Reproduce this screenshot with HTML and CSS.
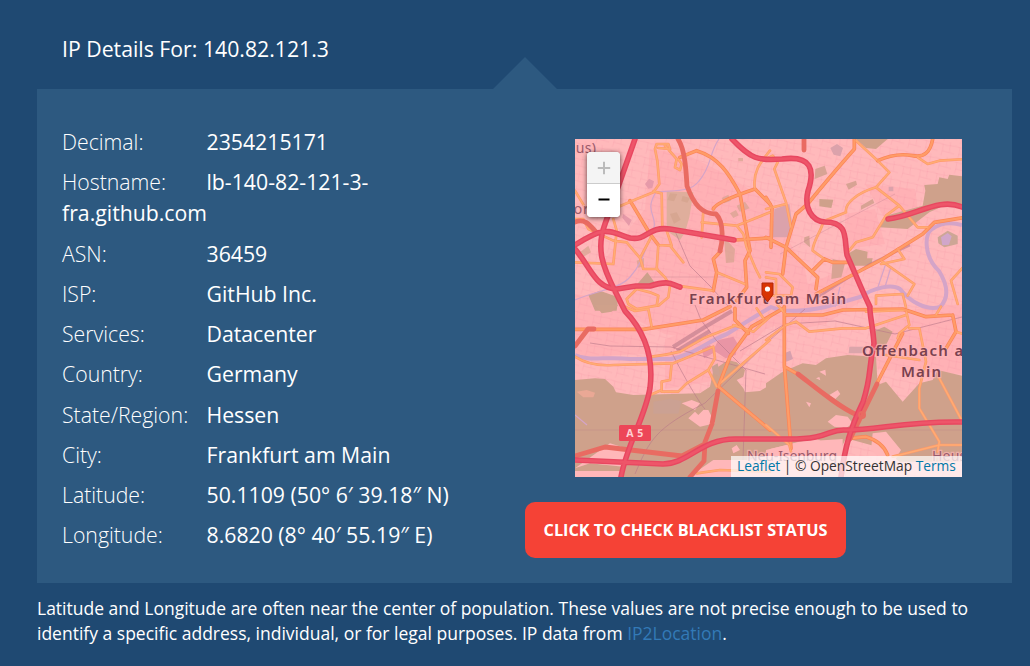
FILE: index.html
```html
<!DOCTYPE html>
<html lang="en">
<head>
<meta charset="utf-8">
<title>IP Details</title>
<link rel="stylesheet" href="styles.css">
</head>
<body>
<main class="page">
  <h1 class="heading">IP Details For: 140.82.121.3</h1>
  <section class="panel">
    <div class="details">
      <p class="row"><span class="label">Decimal:</span><span>2354215171</span></p>
      <p class="row"><span class="label">Hostname:</span><span>lb-140-82-121-3-<br>fra.github.com</span></p>
      <p class="row"><span class="label">ASN:</span><span>36459</span></p>
      <p class="row"><span class="label">ISP:</span><span>GitHub Inc.</span></p>
      <p class="row"><span class="label">Services:</span><span>Datacenter</span></p>
      <p class="row"><span class="label">Country:</span><span>Germany</span></p>
      <p class="row"><span class="label">State/Region:</span><span>Hessen</span></p>
      <p class="row"><span class="label">City:</span><span>Frankfurt am Main</span></p>
      <p class="row"><span class="label">Latitude:</span><span>50.1109 (50° 6′ 39.18″ N)</span></p>
      <p class="row"><span class="label">Longitude:</span><span>8.6820 (8° 40′ 55.19″ E)</span></p>
    </div>
    <div class="side">
      <div class="map">
        <svg class="tiles" viewBox="0 0 387 338" width="387" height="338">
          <defs>
            <pattern id="streets" width="17" height="15" patternUnits="userSpaceOnUse" patternTransform="rotate(12)">
              <path d="M0 3L8 4 17 3M4 3L5 9 4 15M11 0L12 10M4 10L17 11" fill="none" stroke="#f391a2" stroke-width=".6" opacity=".4"/>
            </pattern>
          </defs>
          <rect width="387" height="338" fill="#ffb9bb"/>
          <!-- built-up areas -->
          <g fill="#ffb1b5">
            <path d="M75 10L110 15 150 35 190 60 230 130 235 160 205 185 150 205 90 195 40 170 30 120 70 70z"/>
            <path d="M290 45L340 50 345 85 310 80zM270 75L300 70 310 105 270 110z"/>
            <path d="M0 155L60 165 70 215 0 218z"/>
            <path d="M200 160L280 125 290 160 250 185 200 195z"/>
            <path d="M300 175L387 165V235L300 230z"/>
            <path d="M90 200L150 180 190 190 150 240 90 250z"/>
          </g>
          <rect width="387" height="338" fill="url(#streets)"/>
          <!-- woods and parks -->
          <g transform="translate(-5 -5) scale(.33333)">
            <path fill="#dfae9c" d="M290 172L370 175 358 250 345 295 330 318 290 290z"/>
            <path fill="#cda08b" d="M55 483L90 470 145 490 140 530 75 530zM200 452L232 415 255 447 245 462z"/>
            <path fill="#d3a28c" opacity=".65" d="M462 310L495 345 492 385 468 387zM300 178l22 2-10 22-20-4zM338 186l22 6-8 14-18-5zM300 240l20-5 12 22-20 12zM500 215l25-12 14 20-30 10zM455 192l20-10 8 18-20 8zM505 72l14 0 0 10-14 0zM480 238l18-10 8 16-16 8zM200 380l22-8 0 25-18 4zM30 355l25-20 8 20-25 15z"/>
            <path fill="#e69aa9" d="M225 150l12-16 15 8-5 20-12 2zM160 240l25 18-8 18-20-25zM75 215l15-10 25 20-10 15z"/>
          </g>
          <g transform="translate(191 -5) scale(.33333)">
            <path fill="#cfa18b" d="M270 15L365 15 330 45 300 42zM475 153L515 150 520 130 545 135 550 122 600 128V225L540 212 490 235 425 285 340 280 360 245 470 215 478 170zM160 195l42 2-6 25-36-5zM245 360l25-15 35 8-2 20 17 0-5 22-60 0z"/>
            <path fill="#d8a394" d="M240 150l30-10 3 12-25 15zM285 215l35-20 5 12-40 20zM148 105l28-10 8 25-38 15zM115 310l15-5 2 35-18-15zM200 375l38 10-12 45-30 5z"/>
            <path fill="#dba2ab" d="M25 225L70 210 80 280 65 310 18 310zM193 42l20-12 18 12-8 25-20-5zM368 158h14v14h-14z"/>
            <path fill="#cda695" d="M515 310l30-20 30 15 0 25-40 10-18-12z"/><path fill="#d1a6ca" d="M525 310l20-13 12 10-8 25-20 2z"/>
          </g>
          <g transform="translate(-5 166) scale(.33333)">
            <path fill="#cfa18b" d="M15 225L75 220 105 222 130 245 138 262 190 270 390 265 420 245 430 195 475 165 500 172 525 195 520 215 500 225 520 250 525 262 570 258 600 240V520H15zM75 0H145L125 20 95 25z"/>
            <path fill="#ffb7b9" d="M15 490L120 415 175 432 160 485 60 475zM15 498H150L145 520H15zM335 295l30-10 25 10-15 20zM355 340l20-20 10 10 15-15 15 0 20 40-45 10zM430 465h100l70-15v70H350zM485 430l15-10 10 15-20 10z"/>
            <path fill="#cba193" d="M250 290l50-8 35 6-10 38-75 0zM425 185l18-10 8 40-22-10z"/>
            <path fill="#e995a5" d="M395 130l25-10 10 15 15-30 45-10 12 20-5 35-30 10-30-20-35 20z"/>
            <path fill="#eaa895" d="M20 260l30-5 25 8-5 14-30 0z"/>
          </g>
          <g transform="translate(191 166) scale(.33333)">
            <path fill="#cfa18b" d="M0 235L50 200 110 175 150 180 180 160 245 150 330 155 335 240 360 230 410 290 460 235 500 225 515 195 600 215V470H400L350 430 240 400 220 440 150 400 0 435zM320 80L355 65 380 80 360 120 330 150z"/>
            <path fill="#ffb7b9" d="M185 350l25-20 35 5 15 20-20 15-35-5zM190 270l25-15 8 12-15 15zM160 200l18-6 2 18zM120 290l15 5-5 12zM150 220l10-4 3 10zM320 385l40-5 45 55-30 50-60-50zM0 435L100 410 230 402V520H0z"/>
            <path fill="#dba5aa" d="M250 125h55l-5 20-52 0z"/><path fill="#d7a0ae" d="M55 145l18-8 8 25-20 8z"/>
          </g>
          <!-- rivers -->
          <g class="water">
            <path d="M0 216C15 223 29 217 55 220H96C118 216 133 202 152 195L176 180 196 168C209 174 232 172 250 168L285 158C300 148 317 145 325 150C335 163 352 172 365 168C375 158 372 145 364 132C349 118 349 96 357 90C367 83 377 83 387 86" stroke-width="4"/>
            <path d="M144 0C134 14 137 27 124 42C115 54 99 51 81 53C69 72 82 77 79 88C70 111 67 125 55 138C45 150 20 152 0 161M303 148l8-24M310 148l6-20M260 168l5-20M0 276l12 10" stroke-width="1.200"/>
          </g>
          <!-- railways -->
          <g class="rail">
            <path d="M98 208L130 188 157 172M102 212L135 192" stroke-width="4"/>
            <path d="M243 158L295 125 335 106" stroke-width="2.500"/>
            <path d="M15 204L35 207 96 208 190 235M96 212C110 240 125 265 130 270M120 166l6 15 15 20 30 30-3 90M100 92l15 35 20 20 18 20M60 335C75 300 80 290 130 264L195 201 230 170M165 212L210 185 260 182 320 195 387 178" stroke-width="1"/>
            <path d="M0 291H387M75 138H150M205 115L320 55" stroke-width=".5"/>
          </g>
          <!-- secondary roads -->
          <g id="network">
          <g class="roads minor" transform="translate(-5 -5) scale(.33333)">
            <path d="M15 170L45 220 130 225 200 195 250 175 268 150 262 80 255 45 260 30 295 30 300 45 265 42M285 35L320 75 315 100 330 108 335 90 325 75M250 172L275 178 277 285M265 333L300 335 340 385M290 290L305 335M15 255L40 255 55 285 130 320 170 325 210 372 242 312M265 333L260 405 285 430 300 455 295 490 265 515M130 255L140 290 130 390 15 385M210 372L220 405 262 405M320 455L430 470M440 415L525 450M395 265L500 275 600 235M395 310L400 230 430 240M500 275L520 300 530 340 555 400 570 430M600 50C580 75 545 110 555 165M170 495L200 465 240 475 265 485 260 515 200 525 175 510z"/>
            <path d="M180 200L240 300 265 333M330 70L380 50C445 70 475 115 510 180L540 350 525 380 530 460 500 500M430 225Q435 205 555 165L600 210M495 318L600 312M452 352L430 375 440 415 430 470"/>
          </g>
          <g class="roads minor" transform="translate(191 -5) scale(.33333)">
            <path d="M0 75L20 65 35 85 25 105 60 205 75 280M0 225L60 210M270 20L340 85 370 115 330 160 400 215 455 280 490 280M165 265L240 235C235 205 280 175 330 160M400 215L360 245 320 310 270 325 245 355M455 70L485 90 520 80 600 75M170 270C160 300 140 325 140 350L175 375M345 380L445 450 425 485M395 345L415 375 345 390M0 415L40 420 80 460 75 485H0M330 510L330 485 410 480 420 520M600 390L555 440 575 510M0 430L30 435 30 500"/>
            <path d="M265 15L265 45C230 85 190 130 125 210L90 240 60 340 50 420M335 80Q390 55 440 65T500 15M0 310L60 340 155 430 150 465M175 375L140 410M175 375L200 385 245 385M150 480L350 375 470 300 505 265 600 250M0 190L18 220 15 340"/>
          </g>
          <g class="roads minor" transform="translate(-5 166) scale(.33333)">
            <path d="M165 5L195 18 235 12 245 65M15 155Q60 185 130 180L310 175 430 125 435 160 415 195 440 245M305 175L300 225 275 230 275 255 240 270M275 260L325 260 350 235 415 195M245 155Q290 150 330 140L400 100 500 60M600 35L550 80 490 60M560 10L580 40M600 105L450 235M380 505L450 495 600 500"/>
            <path d="M15 73H220L400 45 480 5M640 10L545 65 480 155 445 245M445 245L600 375M495 10L495 45 535 85"/>
          </g>
          <g class="roads minor" transform="translate(191 166) scale(.33333)">
            <path d="M0 105L60 60 90 50 130 80 230 70 300 70 420 30M300 20L420 15 430 60 400 85 395 100M430 70L460 70 480 170M520 220L600 370M480 170L460 250 460 310 520 410 515 440M600 420L520 420 380 455M0 360L70 420 75 440M525 5L510 30M570 80L600 90M360 150L460 165M35 0L60 30"/>
            <path d="M55 5L55 180 75 430M60 30L170 30 230 15 410 12 480 35 560 30M55 185L100 210M410 85L330 240M250 400L300 395Q350 410 365 450M560 30L570 80 540 130"/>
          </g>
          </g>
          <use class="inner" href="#network"/>
          <!-- trunk roads -->
          <g class="roads trunk">
            <path d="M103 0C110 11 111 30 112 47C119 66 127 75 141 75C150 84 147 105 145 112M229 0V11M0 83C12 78 18 91 22 94M19 190L13 190 0 207"/>
            <path d="M143 252L137 285 130 303 129 322 115 338M0 317L30 308 107 317 130 305M223 235C245 252 263 267 280 275M302 245L275 300"/>
          </g>
          <!-- motorways -->
          <g class="roads motorway">
            <path id="a5" d="M60 0L30 85C21 109 27 127 41 154L50 172C69 192 79 217 75 249C70 279 52 305 46 338M0 106C31 86 33 92 55 99C73 102 72 87 95 90L159 101M0 110C17 130 20 149 42 150L61 147H75C94 141 96 145 105 148M157 0C176 20 183 22 207 20C237 16 240 31 233 52C229 68 236 82 250 83C274 83 269 100 272 116C283 141 285 147 295 168C294 172 298 188 299 205C293 230 297 235 288 263C275 290 270 308 266 338M313 80C341 77 364 58 387 68M0 321L88 325C113 325 126 300 160 300H214C255 300 253 290 270 291C304 291 329 282 387 283"/>
          </g>
          <use class="inner" href="#a5"/>
          <circle cx="287" cy="276" r="3" fill="none" stroke="#e96b62" stroke-width="2"/>
          <rect x="44" y="286" width="32" height="16" rx="1.500" fill="#ed4658"/>
          <text class="shield" x="60" y="298" text-anchor="middle">A 5</text>
          <g class="place">
            <text x="114" y="165" textLength="157">Frankfurt am Main</text>
            <text x="287" y="217" textLength="117">Offenbach am</text>
            <text x="326" y="238" textLength="40">Main</text>
            <text class="town" x="172" y="322" textLength="90">Neu-Isenburg</text>
            <text class="town" x="357" y="322" textLength="98">Heusenstamm</text>
            <text class="town" x="-37" y="14" textLength="58">(Taunus)</text>
            <text class="town" x="-43" y="75" textLength="66">Eschborn</text>
          </g>
          <path d="M187 144H198V155.500L192.500 163 187 155.500z" fill="#d93404" stroke="#b32609" stroke-linejoin="round"/>
          <circle cx="192.500" cy="150" r="2.600" fill="#fff"/>
        </svg>
        <div class="zoom">
          <button class="zoom-in" aria-label="Zoom in" disabled><svg viewBox="0 0 14 14" width="14" height="14"><path d="M7 .8V13.200M.8 7H13.200"/></svg></button>
          <button aria-label="Zoom out"><svg viewBox="0 0 14 14" width="14" height="14"><path d="M1.500 5.500H12.500"/></svg></button>
        </div>
        <div class="credit"><a>Leaflet</a> | © OpenStreetMap <a>Terms</a></div>
      </div>
      <button class="check">CLICK TO CHECK BLACKLIST STATUS</button>
    </div>
  </section>
  <p class="note">Latitude and Longitude are often near the center of population. These values are not precise enough to be used to<br>identify a specific address, individual, or for legal purposes. IP data from <a>IP2Location</a>.</p>
</main>
</body>
</html>
```
FILE: styles.css
```css
* { box-sizing: border-box; }
body {
  margin: 0;
  height: 666px;
  overflow: hidden;
  background: #1f4972;
  color: #fff;
  font-family: "Open Sans", sans-serif;
}
.page { padding: 33px 18px 0 37px; }
.heading {
  margin: 0 0 25px;
  padding-left: 25px;
  font-size: 21.250px;
  font-weight: 400;
  line-height: 31px;
}
.panel {
  position: relative;
  display: flex;
  height: 494px;
  padding: 37px 25px 0;
  background: #2d5980;
}
.panel::before {
  content: "";
  position: absolute;
  left: 456px;
  top: -32px;
  border: 32px solid transparent;
  border-top: 0;
  border-bottom-color: #2d5980;
}
.details { width: 463px; font-size: 21.250px; line-height: 31px; }
.row { margin: 0 0 9.250px; white-space: nowrap; }
.label { display: inline-block; width: 144.500px; font-weight: 300; }
.side { padding-top: 13px; }
.map {
  position: relative;
  width: 387px;
  height: 338px;
  margin-left: 50px;
  overflow: hidden;
}
.tiles {
  --minor: #ff9868;
  --minor-width: 8;
  --major: #fb8558;
  --major-width: 11;
  --motorway: #e84760;
  --motorway-width: 5.600;
  display: block;
}
.inner {
  --minor: #ffac74;
  --minor-width: 4.500;
  --major: #ff9c67;
  --major-width: 6.500;
  --motorway: #ee5569;
  --motorway-width: 2.800;
  fill: none;
  stroke-linecap: round;
  stroke-linejoin: round;
}
.water path { fill: none; stroke: #d4a4c8; stroke-linejoin: round; }
.rail path { fill: none; stroke: #b97888; opacity: .6; }
.roads path { fill: none; stroke-linecap: round; stroke-linejoin: round; }
.minor path:first-child { stroke: var(--minor); stroke-width: var(--minor-width); }
.minor path:last-child { stroke: var(--major); stroke-width: var(--major-width); }
.trunk path { stroke: #e96b62; stroke-width: 4.800; }
#a5 { stroke: var(--motorway); stroke-width: var(--motorway-width); }
.shield { fill: #ffd0d2; font: 700 10.500px "Noto Sans", sans-serif; letter-spacing: .5px; }
.place text {
  fill: #79414f;
  stroke: #ffb7b9;
  stroke-width: 2.500px;
  stroke-opacity: .65;
  paint-order: stroke;
  font: 600 15px "Noto Sans", sans-serif;
}
.place .town { font-weight: 400; font-size: 14px; fill: #9a5a6b; }
.zoom {
  position: absolute;
  left: 12px;
  top: 13px;
  width: 33px;
  overflow: hidden;
  border-radius: 4px;
  background: #fff;
  box-shadow: 0 1px 5px rgba(0, 0, 0, .65);
}
.zoom button {
  display: flex;
  align-items: center;
  justify-content: center;
  width: 33px;
  height: 33px;
  padding: 0;
  border: 0;
  background: #fff;
}
.zoom .zoom-in { height: 32px; background: #f4f4f4; border-bottom: 1px solid #ccc; }
.zoom path { fill: none; stroke: #000; stroke-width: 2; }
.zoom .zoom-in path { stroke: #bbb; }
.credit {
  position: absolute;
  right: 0;
  bottom: 0;
  width: 231px;
  height: 21px;
  padding-left: 6px;
  background: rgba(255, 255, 255, .7);
  color: #333;
  font-size: 13.750px;
  line-height: 20px;
  white-space: nowrap;
}
.credit a { color: #0078a8; }
.check {
  display: block;
  width: 321px;
  height: 56px;
  margin-top: 25px;
  padding: 0;
  border: 0;
  border-radius: 10px;
  background: #f54236;
  color: #fff;
  font: 700 16.250px "Open Sans", sans-serif;
}
.note { margin: 13px 0 0; font-size: 17.510px; line-height: 25px; white-space: nowrap; }
.note a { color: #337ab7; }
```
